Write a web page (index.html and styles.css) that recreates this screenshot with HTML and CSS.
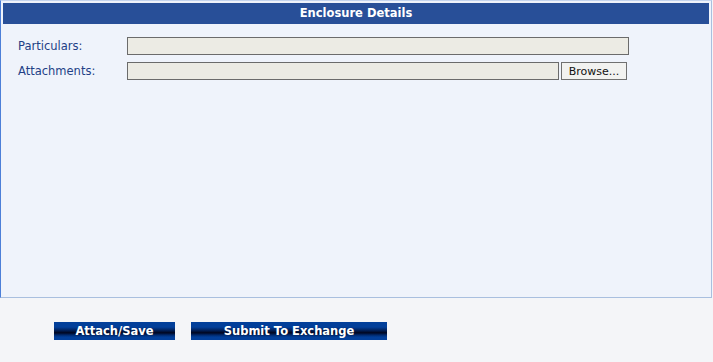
FILE: index.html
```html
<!DOCTYPE html>
<html lang="en">

<head>
  <meta charset="UTF-8">
  <title>Enclosure Details</title>
  <link rel="stylesheet" href="styles.css">
</head>

<body>
  <div class="panel">
    <div class="panel-title">Enclosure Details</div>
    <form class="enclosure-form">
      <div class="form-row">
        <label class="form-label" for="particulars">Particulars:</label>
        <input type="text" class="field field-wide" id="particulars">
      </div>
      <div class="form-row">
        <label class="form-label" for="attachment">Attachments:</label>
        <input type="text" class="field field-file" id="attachment">
        <button type="button" class="browse-btn">Browse...</button>
      </div>
    </form>
  </div>

  <div class="actions">
    <button type="button" class="action-btn btn-save">Attach/Save</button>
    <button type="button" class="action-btn btn-submit">Submit To Exchange</button>
  </div>
</body>

</html>
```

FILE: styles.css
```css
body {
  margin: 0;
  background: #f4f5f8;
  font-family: "DejaVu Sans", Verdana, sans-serif;
  font-size: 11.5px;
}

/* 主面板 */
.panel {
  width: 706px;
  height: 292px;
  padding: 2px;
  background: #eff3fb;
  border-top: 1px solid #c4d4ee;
  border-left: 1px solid #4c7fd8;
  border-right: 1px solid #a9bfdf;
  border-bottom: 1px solid #a9bfdf;
}

.panel-title {
  height: 21px;
  line-height: 21px;
  background: #284f98;
  color: #fff;
  font-weight: bold;
  text-align: center;
}

.enclosure-form {
  padding: 13px 0 0 15px;
  display: flex;
  flex-direction: column;
  gap: 7px;
}

.form-row {
  display: flex;
  align-items: center;
  height: 18px;
}

.form-label {
  width: 109px;
  color: #233f86;
}

.field {
  box-sizing: border-box;
  height: 18px;
  margin: 0;
  padding: 0 3px;
  background: #ecebe4;
  border: 1px solid #6b6b6b;
  font-family: inherit;
  font-size: 11px;
}

.field-wide {
  width: 502px;
}

.field-file {
  width: 432px;
}

.browse-btn {
  box-sizing: border-box;
  width: 66px;
  height: 18px;
  margin: 0 0 0 2px;
  padding: 0;
  background: #f2f2f0;
  border: 1px solid #707070;
  font-family: inherit;
  font-size: 11px;
  color: #111;
}

/* 底部按钮 */
.actions {
  display: flex;
  gap: 16px;
  padding: 24px 0 0 54px;
}

.action-btn {
  height: 18px;
  margin: 0;
  padding: 0;
  border: none;
  color: #fff;
  font-family: inherit;
  font-size: 11.5px;
  font-weight: bold;
  background: linear-gradient(to bottom, #023f9a 0%, #023f9a 28%, #01286a 42%, #000620 60%, #01286a 72%, #023f9a 84%, #023f9a 100%);
}

.btn-save {
  width: 121px;
}

.btn-submit {
  width: 196px;
}
```
